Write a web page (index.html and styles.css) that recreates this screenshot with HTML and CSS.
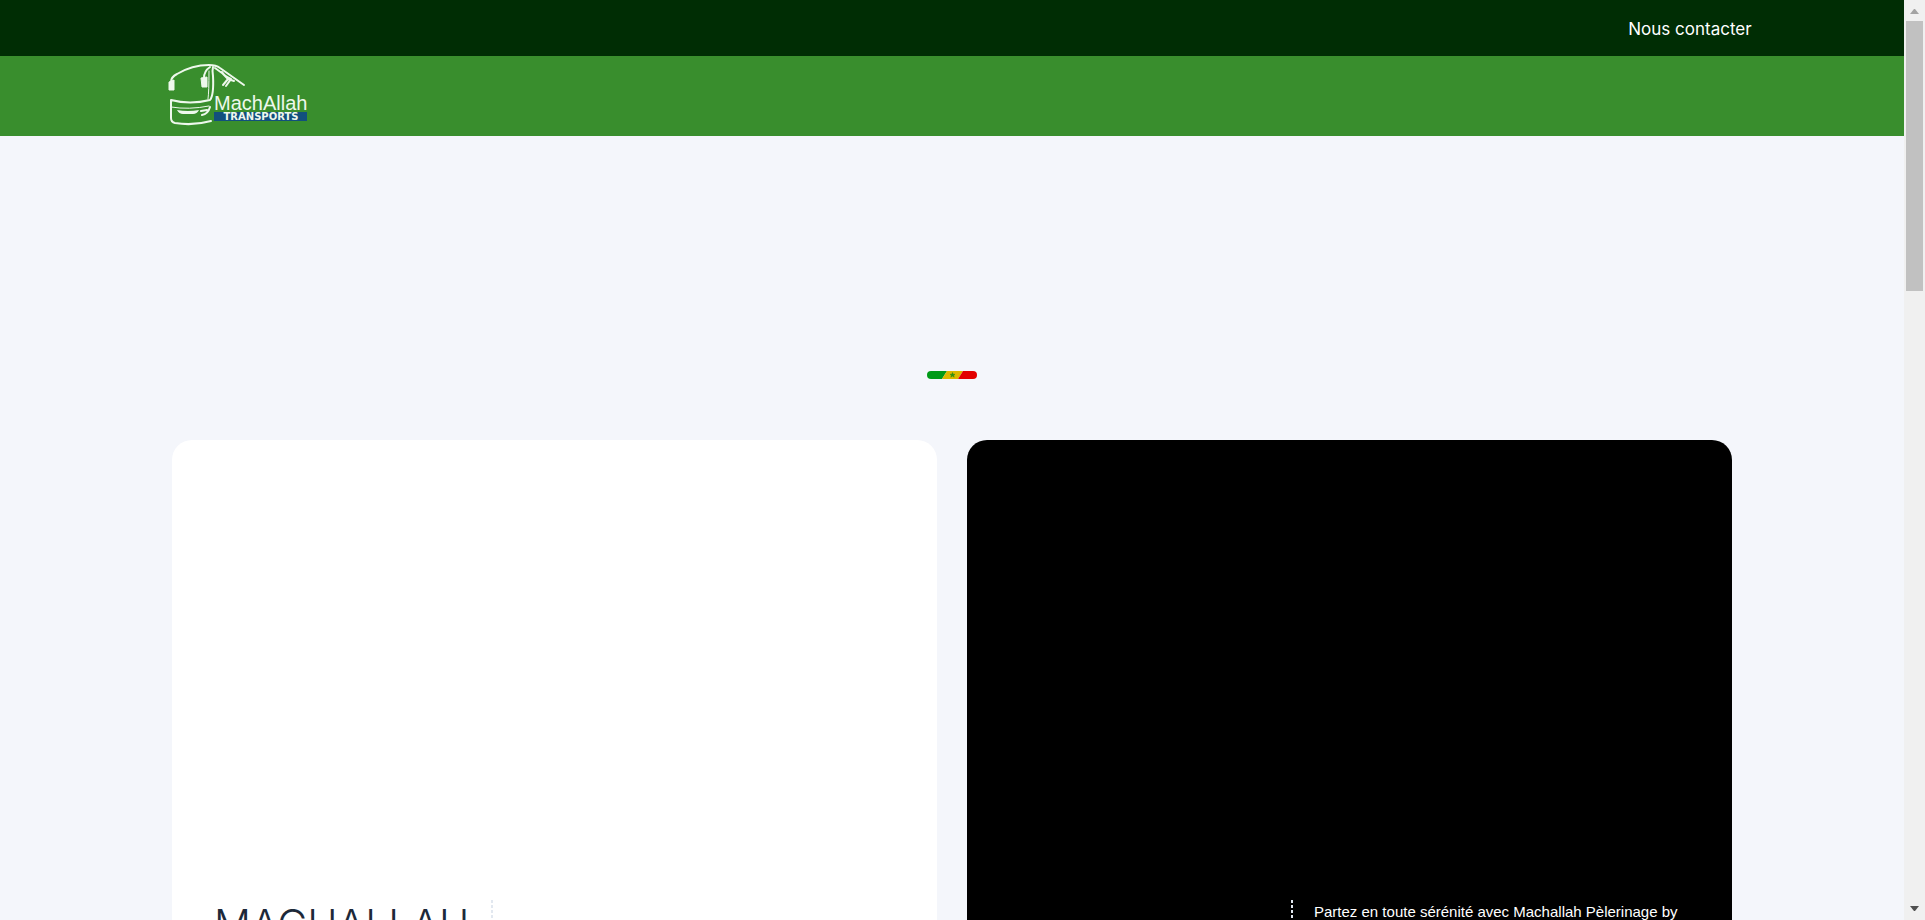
FILE: index.html
```html
<!DOCTYPE html>
<html lang="fr">
<head>
<meta charset="utf-8">
<meta name="viewport" content="width=device-width, initial-scale=1">
<title>MachAllah Transports</title>
<link rel="stylesheet" href="styles.css">
</head>
<body>
<div class="page">
  <nav class="topbar"><a class="contact" href="#contact">Nous contacter</a></nav>
  <header class="header">
    <a class="brand" href="#" aria-label="MachAllah Transports">
      <svg class="logo" width="144" height="66" viewBox="0 0 144 66">
        <g fill="none" stroke="#eef8ec" stroke-linecap="round" stroke-linejoin="round">
          <path d="M5 20Q5 15 11 12Q26 3 43 3Q50 3 54 6L78 23" stroke-width="2"/>
          <path d="M38 16Q38 9 44 5" stroke-width="2"/>
          <path d="M47 5Q46 9 47 14Q48 33 44 38Q24 43 5 38V56Q5 60 9 61Q27 64 45 59" stroke-width="2"/>
          <path d="M43 9Q43 30 42 37M5 45Q23 48 43 44" stroke-width="1"/>
          <path d="M49 6Q57 11 62 17L57 23M56 10Q58 14 65 17L60 24M62 17L68 19" stroke-width="2"/>
          <path d="M44 45Q42 52 36 53M35 49L41 48" stroke-width="2"/>
        </g>
        <path d="M3 20L8 18V28H3ZM35 16L41 15V25H36Z" fill="#eef8ec" stroke="#eef8ec" stroke-width="1"/>
        <path d="M11 48Q22 50 33 48Q31 52 27 52H17Q13 52 11 48Z" fill="#eef8ec"/>
        <path d="M48 50H141V59H48Z" fill="#12507d"/>
        <text class="logo-name" x="48" y="48">MachAllah</text>
        <text class="logo-sub" x="95" y="58" text-anchor="middle">TRANSPORTS</text>
      </svg>
    </a>
  </header>
  <main class="content">
    <svg class="flag" width="50" height="8" viewBox="0 0 50 8" aria-hidden="true">
      <path d="M4 0H20L15 8H4A4 4 0 0 1 4 0Z" fill="#009a17"/>
      <path d="M20 0H36L31 8H15Z" fill="#dcb800"/>
      <path d="M36 0H46A4 4 0 0 1 46 8H31Z" fill="#e30000"/>
      <path d="M25.500 1.500L26.300 3.300H28L26.700 4.400L27.200 6.200L25.500 5.100L23.800 6.200L24.300 4.400L23 3.300H24.700Z" fill="#2c9014" stroke="#2c9014" stroke-width=".5"/>
    </svg>
    <div class="cards">
      <article class="card card-light">
        <h2 class="card-title">MACHALLAH</h2>
        <div class="divider"></div>
      </article>
      <article class="card card-dark">
        <div class="divider"></div>
        <p class="card-text">Partez en toute sérénité avec Machallah Pèlerinage by</p>
      </article>
    </div>
  </main>
</div>
<div class="scrollbar" aria-hidden="true">
  <svg class="arrow" width="9" height="5" viewBox="0 0 9 5"><path d="M0 5L4 0H5L9 5Z" fill="#a3a3a3"/></svg>
  <div class="thumb"></div>
  <svg class="arrow arrow-down" width="9" height="5" viewBox="0 0 9 5"><path d="M0 0H9L5 5H4Z" fill="#505050"/></svg>
</div>
</body>
</html>
```
FILE: styles.css
```css
* { box-sizing: border-box; }
body {
  margin: 0;
  height: 100vh;
  overflow: hidden;
  display: flex;
  background: #f4f6fb;
  font-family: Inter, "Open Sans", sans-serif;
}
.page {
  flex: 1;
  min-width: 0;
  overflow: hidden;
  display: flex;
  flex-direction: column;
}
.topbar {
  flex: none;
  height: 56px;
  padding: 2px 8% 0;
  display: flex;
  align-items: center;
  justify-content: flex-end;
  background: #002d04;
}
.contact { color: #fff; font-size: 17px; line-height: 24px; text-decoration: none; }
.header {
  flex: none;
  height: 80px;
  padding: 6px 166px;
  background: #398e2d;
}
.brand, .logo { display: block; }
.brand { width: 144px; }
.logo-name {
  font: 20px "Liberation Sans", sans-serif;
  fill: #eef8ec;
}
.logo-sub { font: bold 10px "DejaVu Sans", sans-serif; fill: #eef8ec; }
.content { flex: 1; display: flex; flex-direction: column; }
.flag { display: block; margin: 235px auto 61px; }
.cards {
  width: calc(100% - 48px);
  max-width: 1560px;
  margin: 0 auto;
  display: grid;
  grid-template-columns: 1fr 1fr;
  gap: 30px;
}
.card {
  height: 640px;
  padding: 460px 43px 40px 42px;
  border-radius: 20px;
  display: flex;
}
.card-light { background: #fff; }
.card-dark { background: #000; justify-content: flex-end; }
.card-title {
  margin: 0;
  padding-right: 22px;
  color: #1d2939;
  font-size: 41px;
  font-weight: 300;
  line-height: 48px;
}
.divider {
  width: 2px;
  height: 120px;
  background: repeating-linear-gradient(#e2e8f0 0 3px, transparent 3px 5px);
}
.card-text {
  width: 396px;
  margin: 0;
  padding-left: 21px;
  color: #fff;
  font-family: "Liberation Sans", sans-serif;
  font-size: 15px;
  line-height: 24px;
  white-space: nowrap;
}
.scrollbar {
  flex: none;
  width: 21px;
  padding: 9px 2px;
  display: flex;
  flex-direction: column;
  align-items: center;
  background: #f0f0f0;
}
.thumb { width: 17px; height: 270px; margin-top: 7px; background: #c1c1c1; }
.arrow { display: block; }
.arrow-down { margin-top: auto; }
```
